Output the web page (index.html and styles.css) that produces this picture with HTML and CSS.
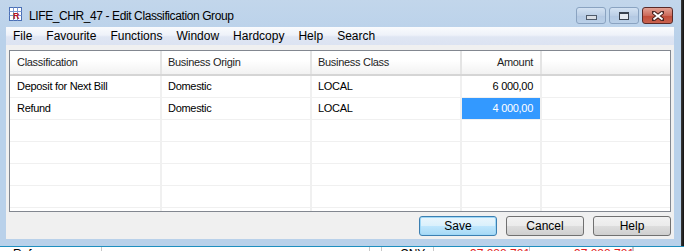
FILE: index.html
```html
<!DOCTYPE html>
<html lang="en">
<head>
    <meta charset="UTF-8">
    <meta name="viewport" content="width=device-width, initial-scale=1.0">
    <title>Edit Classification Group</title>
    <link rel="stylesheet" href="styles.css">
</head>
<body>
    <div class="desk">
        <div class="window">
            <div class="titlebar">
                <svg class="app-icon" width="13" height="14" viewBox="0 0 13 14">
                    <rect x="0.5" y="0.5" width="12" height="13" fill="#fff" stroke="#4a6fb5"/>
                    <path d="M0.5 4.5H12.5M0.5 8.5H12.5M4.5 0.5V13.5M8.5 0.5V13.5" stroke="#7d9bd3" fill="none"/>
                    <text x="4" y="12" font-size="9" font-weight="bold" font-family="Liberation Sans, sans-serif" fill="#c0141b">R</text>
                </svg>
                <span class="title">LIFE_CHR_47 - Edit Classification Group</span>
                <div class="controls">
                    <span class="ctl"><i class="min-icon"></i></span>
                    <span class="ctl"><i class="max-icon"></i></span>
                    <span class="ctl close">
                        <svg width="12" height="10" viewBox="0 0 12 10">
                            <path d="M1 1L11 9M11 1L1 9" stroke="#4a2320" stroke-width="4" stroke-linecap="square"/>
                            <path d="M1.5 1.5L10.5 8.5M10.5 1.5L1.5 8.5" stroke="#fff" stroke-width="2"/>
                        </svg>
                    </span>
                </div>
            </div>

            <ul class="menubar">
                <li>File</li>
                <li>Favourite</li>
                <li>Functions</li>
                <li>Window</li>
                <li>Hardcopy</li>
                <li>Help</li>
                <li>Search</li>
            </ul>

            <div class="client">
                <div class="grid">
                    <div class="row head">
                        <div class="cell">Classification</div>
                        <div class="cell">Business Origin</div>
                        <div class="cell">Business Class</div>
                        <div class="cell num">Amount</div>
                        <div class="cell"></div>
                    </div>
                    <div class="row">
                        <div class="cell">Deposit for Next Bill</div>
                        <div class="cell">Domestic</div>
                        <div class="cell">LOCAL</div>
                        <div class="cell num">6 000,00</div>
                        <div class="cell"></div>
                    </div>
                    <div class="row">
                        <div class="cell">Refund</div>
                        <div class="cell">Domestic</div>
                        <div class="cell">LOCAL</div>
                        <div class="cell num selected">4 000,00</div>
                        <div class="cell"></div>
                    </div>
                    <div class="row"><div class="cell"></div><div class="cell"></div><div class="cell"></div><div class="cell"></div><div class="cell"></div></div>
                    <div class="row"><div class="cell"></div><div class="cell"></div><div class="cell"></div><div class="cell"></div><div class="cell"></div></div>
                    <div class="row"><div class="cell"></div><div class="cell"></div><div class="cell"></div><div class="cell"></div><div class="cell"></div></div>
                    <div class="row"><div class="cell"></div><div class="cell"></div><div class="cell"></div><div class="cell"></div><div class="cell"></div></div>
                    <div class="row"><div class="cell"></div><div class="cell"></div><div class="cell"></div><div class="cell"></div><div class="cell"></div></div>
                </div>

                <div class="buttons">
                    <button class="btn default">Save</button>
                    <button class="btn">Cancel</button>
                    <button class="btn">Help</button>
                </div>
            </div>
        </div>
        <div class="edge"></div>
    </div>

    <div class="behind">
        <div class="bcell w105">ce Reference</div>
        <div class="bcell w268"></div>
        <div class="bcell w12"></div>
        <div class="bcell w52 cny">CNY</div>
        <div class="bcell w96 red">37,888,781</div>
        <div class="bcell w103 red2">37,888,781</div>
        <div class="bcell"></div>
    </div>
</body>
</html>
```

FILE: styles.css
```css
* {
    margin: 0;
    padding: 0;
    box-sizing: border-box;
    font-family: 'Liberation Sans', Arial, sans-serif;
}

body {
    width: 684px;
    height: 251px;
    overflow: hidden;
    background-color: #fff;
    color: #000;
}

.desk {
    display: flex;
    height: 246px;
}

.window {
    width: 681px;
    height: 246px;
    display: flex;
    flex-direction: column;
    padding: 0 7px 7px 6px;
    background: linear-gradient(#c2d6eb, #b9d1ea 40px);
}

.edge {
    flex: 1;
    background: linear-gradient(90deg, #3a3a3a, #101010);
}

/* title bar */

.titlebar {
    height: 27px;
    display: flex;
    align-items: flex-start;
}

.app-icon {
    margin: 7px 0 0 3px;
}

.title {
    margin: 9px 0 0 7px;
    font-size: 12px;
    letter-spacing: -0.4px;
    line-height: 15px;
    color: #000;
}

.controls {
    margin: 7px 1px 0 auto;
    display: flex;
    gap: 3px;
}

.ctl {
    width: 30px;
    height: 17px;
    display: flex;
    align-items: center;
    justify-content: center;
    border: 1px solid #8aa3c1;
    border-radius: 3px;
    background: linear-gradient(#d3e2f2, #bccfe6 50%, #b3c8e2 51%, #bad0e8);
}

.min-icon {
    width: 11px;
    height: 5px;
    margin-top: 4px;
    border: 1px solid #4e5a6a;
    background-color: #d8dde4;
}

.max-icon {
    width: 10px;
    height: 8px;
    border: 1px solid #39424f;
    border-top-width: 2px;
    background-color: #e6ebf2;
}

.close {
    width: 31px;
    border-color: #5a2a28;
    background: linear-gradient(#e3a193, #cc6a5b 50%, #c14b38 51%, #c9624f);
}

/* menu */

.menubar {
    height: 18px;
    display: flex;
    list-style: none;
    padding-top: 1px;
    background: linear-gradient(#fafbfd, #eef2f9 45%, #dfe6f3 55%, #dce3f2);
}

.menubar li {
    padding: 0 7px;
    font-size: 12px;
    line-height: 17px;
    color: #000;
}

/* client area */

.client {
    flex: 1;
    display: flex;
    flex-direction: column;
    padding: 5px 3px 0 3px;
    background-color: #f0f0f0;
}

.grid {
    height: 162px;
    overflow: hidden;
    border: 1px solid #828790;
    background-color: #fff;
}

.row {
    display: grid;
    grid-template-columns: 152px 150px 150px 80px 1fr;
    height: 22px;
    border-bottom: 1px solid #f0f0f0;
}

.row.head {
    height: 25px;
    border-bottom: 2px solid #d5d5d5;
    background: linear-gradient(#fff, #fff 40%, #f2f2f2);
}

.cell {
    padding: 0 7px 0 6px;
    font-size: 11px;
    letter-spacing: -0.3px;
    line-height: 21px;
    white-space: nowrap;
    overflow: hidden;
    border-right: 2px solid #f0f0f0;
    color: #000;
}

.row .cell:first-child {
    padding-left: 7px;
}

.row .cell:last-child {
    border-right: none;
}

.head .cell {
    line-height: 23px;
    border-right-color: #e4e4e4;
    color: #1e1e1e;
}

.cell.num {
    text-align: right;
}

.cell.selected {
    background-color: #3399ff;
    color: #fff;
}

.buttons {
    margin-top: 4px;
    display: flex;
    justify-content: flex-end;
    gap: 9px;
}

.btn {
    width: 78px;
    height: 20px;
    border: 1px solid #707070;
    border-radius: 3px;
    background: linear-gradient(#f2f2f2, #ebebeb 50%, #dddddd 51%, #cfcfcf);
    font-size: 12px;
    color: #000;
}

.btn.default {
    border-color: #3c7fb1;
    background: linear-gradient(#eaf6fd, #d9f0fc 50%, #bee6fd 51%, #a7d9f5);
    box-shadow: inset 0 0 0 1px #9fd8f7;
}

/* window behind the dialog */

.behind {
    display: flex;
    height: 5px;
    overflow: hidden;
    border-top: 1px solid #1f8fbf;
    background-color: #fff;
}

.bcell {
    font-size: 12px;
    line-height: 13px;
    padding-top: 1px;
    border-right: 1px solid #c8c8c8;
    white-space: nowrap;
    overflow: hidden;
}

.w105 { width: 105px; margin-left: -3px; }
.w268 { width: 268px; }
.w12 { width: 12px; }
.w52 { width: 52px; }
.w96 { width: 96px; }
.w103 { width: 103px; }

.cny {
    padding-left: 18px;
}

.red {
    padding-left: 36px;
    color: #e02020;
}

.red2 {
    padding-left: 44px;
    color: #e02020;
}
```
